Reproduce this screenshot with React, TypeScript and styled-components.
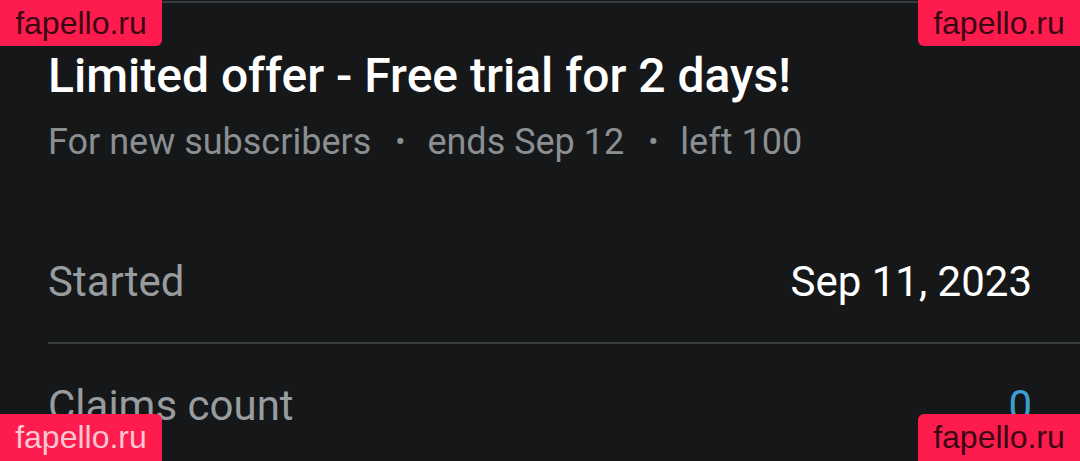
import styled, { createGlobalStyle } from 'styled-components'

const GlobalStyle = createGlobalStyle`
  html, body {
    margin: 0;
    padding: 0;
    background: #161719;
  }
  body {
    font-family: Roboto, "Noto Sans", sans-serif;
    overflow: hidden;
  }
`

const Page = styled.div`
  position: relative;
  width: 1080px;
  height: 461px;
  overflow: hidden;
  background: #161719;
`

const Card = styled.div`
  display: flex;
  flex-direction: column;
  margin-top: 1px;
  border-top: 2px solid #383b3e;
`

const Header = styled.div`
  display: flex;
  flex-direction: column;
  gap: 16px;
  padding: 45px 48px 0;
`

const Title = styled.h1`
  margin: 0;
  color: #ffffff;
  font-size: 48px;
  line-height: 56px;
  font-weight: 500;
`

const Meta = styled.div`
  display: flex;
  align-items: center;
  color: #8a8f92;
  font-size: 36px;
  line-height: 44px;
`

const Dot = styled.span`
  margin: 0 22px 0 24px;
  font-size: 30px;
`

const Rows = styled.div`
  display: flex;
  flex-direction: column;
  margin-top: 56px;
  padding-left: 48px;
`

// a row with a divider carries its 2px rule inside its own height
const Row = styled.div<{ $divider?: boolean }>`
  box-sizing: border-box;
  display: flex;
  align-items: center;
  justify-content: space-between;
  height: ${(p) => (p.$divider ? '124px' : '122px')};
  padding-right: 48px;
  border-bottom: ${(p) => (p.$divider ? '2px solid #393e3c' : 'none')};
`

const Label = styled.span`
  color: #979c9f;
  font-size: 42px;
`

const Value = styled.span<{ $accent?: boolean }>`
  color: ${(p) => (p.$accent ? '#3b9fd1' : '#ffffff')};
  font-size: 42px;
`

type Corner = 'tl' | 'tr' | 'bl' | 'br'

const Watermark = styled.div<{ $corner: Corner; $light?: boolean }>`
  position: absolute;
  ${(p) => (p.$corner[0] === 't' ? 'top: 0;' : 'bottom: 0;')}
  ${(p) => (p.$corner[1] === 'l' ? 'left: 0;' : 'right: 0;')}
  width: 162px;
  height: ${(p) => (p.$corner[0] === 't' ? '46px' : '47px')};
  display: flex;
  align-items: center;
  justify-content: center;
  background: #fe1c4f;
  color: ${(p) => (p.$light ? '#f9c6d2' : '#3a0813')};
  font-family: "Liberation Sans", Lato, sans-serif;
  font-size: 32px;
  border-radius: ${(p) =>
    ({ tl: '0 0 6px 0', tr: '0 0 0 6px', bl: '0 6px 0 0', br: '6px 0 0 0' })[p.$corner]};
`

const App = () => {
  return (
    <Page>
      <GlobalStyle />
      <Card>
        <Header>
          <Title>Limited offer - Free trial for 2 days!</Title>
          <Meta>
            For new subscribers
            <Dot>•</Dot>
            ends Sep 12
            <Dot>•</Dot>
            left 100
          </Meta>
        </Header>
        <Rows>
          <Row $divider>
            <Label>Started</Label>
            <Value>Sep 11, 2023</Value>
          </Row>
          <Row>
            <Label>Claims count</Label>
            <Value $accent>0</Value>
          </Row>
        </Rows>
      </Card>
      <Watermark $corner="tl">fapello.ru</Watermark>
      <Watermark $corner="tr">fapello.ru</Watermark>
      <Watermark $corner="bl" $light>fapello.ru</Watermark>
      <Watermark $corner="br">fapello.ru</Watermark>
    </Page>
  )
}

export default App
